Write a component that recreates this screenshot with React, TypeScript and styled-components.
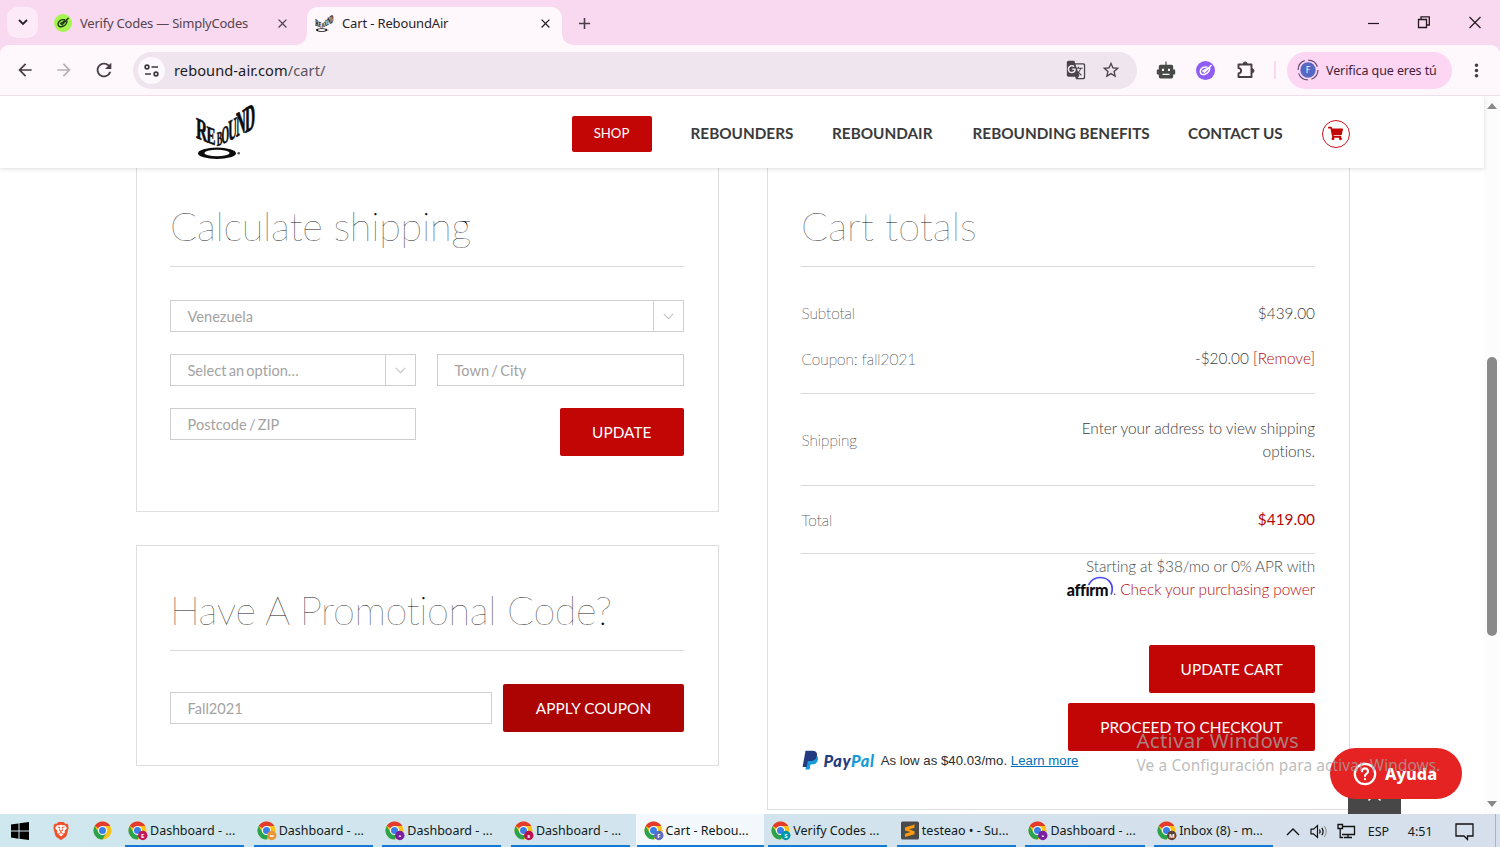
import React from "react";
import styled, { createGlobalStyle } from "styled-components";
import { MdArrowBack, MdArrowForward, MdRefresh, MdGTranslate, MdStarBorder, MdMoreVert, MdClose, MdAdd } from "react-icons/md";
import { FaShoppingCart } from "react-icons/fa";
import { SiBrave } from "react-icons/si";

const Global = createGlobalStyle`
  * { box-sizing: border-box; }
  html, body { margin: 0; padding: 0; overflow: hidden; background: #fff; }
  svg { display: block; flex: none; }
`;

const ui = `"Noto Sans", "Open Sans", sans-serif`;
const lato = `Lato, "Liberation Sans", sans-serif`;

const Screen = styled.div`
  position: relative;
  width: 1500px;
  height: 847px;
  display: flex;
  flex-direction: column;
  overflow: hidden;
  font-family: ${ui};
`;

/* ---------- browser chrome ---------- */
const TabStrip = styled.div`
  height: 45px;
  flex: none;
  display: flex;
  background: #f8d9ef;
`;
const TabSearch = styled.div`
  width: 31px;
  height: 31px;
  margin: 7px 0 0 7px;
  border-radius: 10px;
  background: #fdeaf8;
  display: flex;
  align-items: center;
  justify-content: center;
`;
const Tab = styled.div<{ $active?: boolean; $w: number; $ml: number }>`
  position: relative;
  width: ${(p) => p.$w}px;
  margin: 7px 0 0 ${(p) => p.$ml}px;
  height: 38px;
  padding: 0 9px 6px 8px;
  display: flex;
  align-items: center;
  border-radius: 11px 11px 0 0;
  color: ${(p) => (p.$active ? "#2b2329" : "#54454f")};
  background: ${(p) => (p.$active ? "#fef8fc" : "transparent")};
`;
const Flare = styled.span<{ $right?: boolean }>`
  position: absolute;
  bottom: 0;
  ${(p) => (p.$right ? "right: -11px;" : "left: -11px;")}
  width: 11px;
  height: 11px;
  background: radial-gradient(circle at ${(p) => (p.$right ? "100%" : "0")} 0, transparent 10.5px, #fef8fc 11px);
`;
const TabTitle = styled.span<{ $ls?: number }>`
  flex: 1;
  margin-left: 8px;
  font-size: 13px;
  line-height: 18px;
  white-space: nowrap;
  letter-spacing: ${(p) => p.$ls ?? 0}px;
`;
const NewTab = styled.div`
  margin: 14px 0 0 13px;
  color: #4a3c46;
`;
const WindowButtons = styled.div`
  margin-left: auto;
  display: flex;
  gap: 37px;
  padding: 15px 18px 0 0;
`;
const Toolbar = styled.div`
  height: 51px;
  flex: none;
  display: flex;
  align-items: center;
  background: #fef8fc;
  border-radius: 9px 9px 0 0;
  border-bottom: 1px solid #ecdfe8;
  color: #4a3c46;
`;
const ToolbarBack = styled.div`
  flex: none;
  background: #f8d9ef;
`;
const NavButtons = styled.div`
  display: flex;
  align-items: center;
  gap: 19px;
  width: 133px;
  padding-left: 15px;
`;
const Omnibox = styled.div`
  width: 1004px;
  height: 37px;
  border-radius: 19px;
  background: #eee5ee;
  display: flex;
  align-items: center;
  padding: 0 16px 0 5px;
  color: #4a444a;
`;
const SiteInfo = styled.div`
  width: 27px;
  height: 27px;
  border-radius: 50%;
  background: #fdf8fd;
  display: flex;
  align-items: center;
  justify-content: center;
`;
const Address = styled.span`
  flex: 1;
  margin: -1px 0 0 9px;
  font-size: 14.6px;
  letter-spacing: 0.08px;
  color: #221c22;
  i { font-style: normal; color: #5d535b; }
`;
const OmniIcons = styled.div`
  display: flex;
  gap: 15px;
  align-items: center;
`;
const Extensions = styled.div`
  display: flex;
  align-items: center;
  gap: 20px;
  margin-left: 19px;
`;
const Separator = styled.div`
  width: 2px;
  height: 18px;
  margin-left: 18px;
  background: #fcd9f1;
`;
const Profile = styled.div`
  width: 165px;
  height: 37px;
  margin: 0 14px 0 11px;
  border-radius: 19px;
  background: #fdd6f3;
  display: flex;
  align-items: center;
  padding-left: 10px;
  gap: 7px;
  font-size: 12.5px;
  letter-spacing: -0.1px;
  color: #421f3a;
  white-space: nowrap;
`;

/* ---------- web page ---------- */
const Viewport = styled.div`
  height: 718px;
  flex: none;
  display: flex;
  overflow: hidden;
  font-family: ${lato};
  font-variant-ligatures: none;
`;
const Page = styled.div`
  position: relative;
  width: 1484px;
`;
const Header = styled.header`
  position: relative;
  z-index: 1;
  height: 72px;
  padding: 0 134.500px 0 195px;
  background: #fff;
  box-shadow: 0 1px 4px rgba(0, 0, 0, 0.14);
  display: flex;
  align-items: center;
  justify-content: space-between;
`;
const Menu = styled.nav`
  display: flex;
  align-items: center;
  gap: 38.5px;
  padding-top: 3px;
`;
const ShopLink = styled.a`
  width: 80px;
  height: 36px;
  margin-right: 0.5px;
  background: #c20505;
  border-radius: 2px;
  color: #fff;
  font-size: 13.2px;
  line-height: 35px;
  text-align: center;
`;
const MenuLink = styled.a<{ $w: number }>`
  width: ${(p) => p.$w}px;
  margin-top: -1px;
  white-space: nowrap;
  color: #3b3b3b;
  font-size: 15.3px;
  font-weight: 700;
`;
const CartButton = styled.a`
  width: 28px;
  height: 28px;
  border: 1.5px solid #c4141c;
  border-radius: 50%;
  display: flex;
  align-items: center;
  justify-content: center;
  color: #c20505;
`;
const Columns = styled.main`
  display: flex;
  gap: 48.5px;
  padding-left: 136px;
  align-items: flex-start;
`;
const LeftColumn = styled.div`
  width: 582.5px;
  display: flex;
  flex-direction: column;
  gap: 33px;
`;
const Card = styled.section<{ $h: number; $open?: boolean; $pt: number }>`
  width: 582.5px;
  height: ${(p) => p.$h}px;
  padding: ${(p) => p.$pt}px 33.5px 0 33px;
  border: 1px solid #dedede;
  ${(p) => p.$open && "border-top: 0;"}
`;
const Title = styled.h2<{ $ls?: number }>`
  margin: 0;
  height: 67px;
  border-bottom: 1px solid #d9d9d9;
  font-size: 39.8px;
  line-height: 52px;
  font-weight: 100;
  color: #111;
  white-space: nowrap;
  letter-spacing: ${(p) => p.$ls ?? 0}px;
`;
const ShippingGrid = styled.div`
  margin-top: 33px;
  display: grid;
  grid-template-columns: 246px 247px;
  grid-template-rows: 32px 32px 48px;
  justify-content: space-between;
  row-gap: 22px;
`;
const Field = styled.div<{ $wide?: boolean; $w?: number }>`
  ${(p) => p.$wide && "grid-column: 1 / 3;"}
  ${(p) => p.$w && `width: ${p.$w}px;`}
  height: 32px;
  border: 1px solid #cfcfcf;
  padding-left: 16.5px;
  display: flex;
  justify-content: space-between;
  color: #a3a3a3;
  font-size: 14.6px;
  line-height: 31px;
  word-spacing: -1.5px;
`;
const Caret = styled.div`
  width: 30px;
  border-left: 1px solid #cfcfcf;
  display: flex;
  align-items: center;
  justify-content: center;
`;
const RedButton = styled.button<{ $w: number; $dark?: boolean }>`
  width: ${(p) => p.$w}px;
  height: 48px;
  padding: 0;
  border: 0;
  border-radius: 2px;
  justify-self: end;
  background: ${(p) => (p.$dark ? "#ac0303" : "#c20505")};
  color: #fff;
  font-family: ${lato};
  font-size: 15.4px;
  line-height: 46px;
  white-space: nowrap;
`;
const CouponRow = styled.div`
  margin-top: 33px;
  display: flex;
  align-items: center;
  justify-content: space-between;
`;
const Row = styled.div<{ $h: number; $line?: boolean; $pb?: number }>`
  height: ${(p) => p.$h}px;
  padding-bottom: ${(p) => p.$pb ?? 0}px;
  display: flex;
  align-items: center;
  justify-content: space-between;
  ${(p) => p.$line && "border-bottom: 1px solid #d9d9d9;"}
`;
const Label = styled.span<{ $ws?: number }>`
  font-size: 15.4px;
  font-weight: 100;
  color: #111;
  -webkit-text-stroke: 0.2px #555;
  padding-left: 0.5px;
`;
const Value = styled.span<{ $w?: number }>`
  font-size: 15.4px;
  line-height: 23px;
  font-weight: 300;
  color: #3c3c3c;
  text-align: right;
  ${(p) => p.$w && `width: ${p.$w}px; letter-spacing: -0.06px;`}
`;
const Red = styled.span<{ $strong?: boolean }>`
  color: #b50a0a;
  font-weight: ${(p) => (p.$strong ? 400 : 300)};
`;
const Totals = styled.div`
  padding-top: 24px;
`;
const Affirm = styled.div`
  margin-top: 1px;
  font-size: 15.4px;
  line-height: 23px;
  font-weight: 300;
  color: #4c4c4c;
`;
const AffirmLine = styled.div<{ $ls: number }>`
  display: flex;
  justify-content: flex-end;
  white-space: pre;
  letter-spacing: ${(p) => p.$ls}px;
`;
const AffirmLogo = styled.span`
  position: relative;
  width: 46px;
  color: #0b0b12;
  font-family: ${lato};
  font-weight: 900;
  font-size: 16px;
  letter-spacing: -0.3px;
  svg { position: absolute; left: 20px; top: -2px; }
`;
const Actions = styled.div`
  margin-top: 44px;
  display: flex;
  flex-direction: column;
  align-items: flex-end;
  gap: 10px;
`;
const PayPal = styled.div`
  display: flex;
  align-items: center;
  height: 20px;
  margin: -1px 0 0 0.5px;
  font-family: "Liberation Sans", Arial, sans-serif;
  font-size: 13.2px;
  letter-spacing: 0.02px;
  color: #2c2e2f;
  white-space: pre;
  a { color: #0070ba; text-decoration: underline; }
`;
const PayPalWord = styled.b`
  margin: 0 6px 0 5px;
  font-family: Lato, sans-serif;
  font-weight: 900;
  font-style: italic;
  font-size: 16.4px;
  letter-spacing: 0.6px;
  color: #253b80;
  span { color: #179bd7; }
`;
const ScrollBar = styled.div`
  width: 16px;
  background: #fcfcfc;
  display: flex;
  flex-direction: column;
  align-items: center;
  padding: 7px 0 7px;
`;
const Thumb = styled.div`
  width: 10px;
  height: 279px;
  margin: 248px 0 auto;
  border-radius: 5px;
  background: #8a8a8a;
`;
const BackToTop = styled.div`
  position: absolute;
  left: 1348px;
  bottom: 0;
  width: 53px;
  height: 53px;
  background: #474747;
  display: flex;
  justify-content: center;
  padding-top: 31px;
`;
const Help = styled.div`
  position: absolute;
  left: 1330px;
  top: 748px;
  width: 132px;
  height: 51px;
  border-radius: 26px;
  background: #e52323;
  display: flex;
  align-items: center;
  padding-left: 23px;
  gap: 8px;
  color: #fff;
  font-family: ${ui};
  font-size: 16.3px;
  font-weight: 800;
`;
const Watermark = styled.div`
  position: absolute;
  left: 1136.5px;
  top: 727px;
  color: rgba(165, 165, 165, 0.75);
  white-space: nowrap;
  pointer-events: none;
`;
const WatermarkTitle = styled.div`
  font-size: 20.4px;
  line-height: 27px;
  letter-spacing: 0.3px;
`;
const WatermarkText = styled.div`
  font-size: 15.4px;
  line-height: 23px;
  letter-spacing: 0.13px;
`;

/* ---------- taskbar ---------- */
const Taskbar = styled.div`
  height: 33px;
  flex: none;
  display: flex;
  background: linear-gradient(90deg, #cfe7ee, #d3e3ed 60%, #d7dfec);
  font-size: 12.5px;
  color: #121a20;
`;
const Pinned = styled.div`
  width: 121px;
  display: flex;
  align-items: center;
  gap: 23px;
  padding: 1px 0 0 11px;
`;
const Task = styled.div<{ $active?: boolean }>`
  width: 128.65px;
  flex: none;
  padding: 0 ${(p) => (p.$active ? 0 : 5.6)}px 0 ${(p) => (p.$active ? 1 : 4)}px;
  background: ${(p) => (p.$active ? "#f2f8fb" : "transparent")};
`;
const TaskInner = styled.div<{ $active?: boolean }>`
  height: 33px;
  display: flex;
  align-items: center;
  gap: 2px;
  padding: 2px 0 0 ${(p) => (p.$active ? 7 : 3)}px;
  border-bottom: 2px solid #1379d3;
  white-space: nowrap;
`;
const Tray = styled.div`
  flex: 1;
  display: flex;
  align-items: center;
  padding: 1px 0 0 7px;
`;
const TrayText = styled.span<{ $w: number; $ml: number }>`
  width: ${(p) => p.$w}px;
  margin-left: ${(p) => p.$ml}px;
`;
const TrayIcon = styled.span<{ $ml: number }>`
  margin-left: ${(p) => p.$ml}px;
`;
const ShowDesktop = styled.div`
  width: 1px;
  height: 33px;
  margin: -1px 4px 0 auto;
  background: #a9b4bf;
`;

const Leaf = ({ bg, fg, size }: { bg: string; fg: string; size: number }) => (
  <svg width={size} height={size} viewBox="0 0 18 18" fill="none" stroke={fg} strokeWidth="1.400" strokeLinecap="round" strokeLinejoin="round">
    <circle cx="9" cy="9" r="9" fill={bg} stroke="none" />
    <path d="M10.500 5.800C7 5 4.200 7.200 4 10c-.1 2.500 2.600 3.400 4.800 2.400 2-.9 4-2.600 4.200-5.200M6.500 9.500l1.600 1.200L14.200 4.300M6.500 9.500l4-2.300" />
  </svg>
);

const letters: [string, number, number, number, number, number][] = [
  ["R", 1, 33.5, 1.55, 0.65, 3],
  ["E", 11.5, 38, 1.35, 0.5, 2.4],
  ["B", 21.8, 42, 0.84, -0.25, 2],
  ["O", 26.6, 40.5, 0.98, -0.45, 2.45],
  ["U", 33.2, 37.5, 1.2, -0.65, 3],
  ["N", 41, 33, 1.35, -0.75, 3.5],
  ["D", 50, 29, 1.4, -0.75, 3.75],
];
const ReboundLogo = ({ w, h }: { w: number; h: number }) => (
  <svg width={w} height={h} viewBox="0 0 62 56" overflow="visible">
    {letters.map(([c, x, y, sx, k, sy]) => (
      <text key={c} transform={`matrix(${sx} ${k} 0 ${sy} ${x} ${y})`} fontFamily="Liberation Serif, serif" fontWeight="700" fontSize="10" fill="#0c0c0c" stroke="#0c0c0c" strokeWidth="0.250">{c}</text>
    ))}
    <path fillRule="evenodd" fill="#0c0c0c" d="M3 49.300a19 5.700 0 1 0 38 0a19 5.700 0 1 0 -38 0ZM9.500 49a12.500 3.200 0 1 0 25 0a12.500 3.200 0 1 0 -25 0Z" />
    <circle cx="43.700" cy="49.300" r="1.300" fill="#555" />
  </svg>
);

const ChromeIcon = ({ badge, mark }: { badge?: string; mark?: string }) => (
  <svg width="20" height="20" viewBox="0 0 20 20">
    <circle cx="9.500" cy="9.500" r="9" fill="#fbc116" />
    <path d="M9.500 9.500L1.700 5A9 9 0 0 1 17.300 5H9.500Z" fill="#e33b2e" />
    <path d="M1.700 5A9 9 0 0 0 9.500 18.500L13.400 11.800L9.500 9.500L5.600 11.800Z" fill="#2ba24c" />
    <circle cx="9.500" cy="9.500" r="4.500" fill="#fff" />
    <circle cx="9.500" cy="9.500" r="3.500" fill="#3a7fe8" />
    {badge && <circle cx="14.800" cy="14.500" r="4.700" fill={badge} />}
    {mark && <text x="14.800" y="16.700" fontSize="6" fontWeight="700" textAnchor="middle" fill="#fff">{mark}</text>}
  </svg>
);

const SublimeIcon = () => (
  <svg width="20" height="19" viewBox="0 0 20 19">
    <rect x="1" y="0.500" width="18" height="18" rx="1.500" fill="#4a4a4a" />
    <path d="M5 6.600L14.500 3.500v3.300L9 8.500 14.500 10.200v3L5 16v-3.300L10.700 11 5 9.400Z" fill="#ff9a0c" />
  </svg>
);

const RobotIcon = () => (
  <svg width="20" height="20" viewBox="0 0 20 20">
    <path fillRule="evenodd" fill="#484a48" d="M9.400 1.500h1.200v3.200H15.500a1.700 1.700 0 0 1 1.700 1.700V9.500h1.200a.8.800 0 0 1 .8.800v3.400a.8.800 0 0 1-.8.800h-1.200v2.300a1.700 1.700 0 0 1-1.700 1.700H4.500a1.700 1.700 0 0 1-1.700-1.700v-2.300H1.600a.8.800 0 0 1-.8-.8v-3.400a.8.800 0 0 1 .8-.8h1.200V6.400a1.700 1.700 0 0 1 1.700-1.700h4.900ZM6 8.800v2.200h2V8.800ZM12 8.800v2.200h2V8.800ZM6.500 13.800v1.200h7v-1.200Z" />
  </svg>
);

const PuzzleIcon = () => (
  <svg width="21" height="21" viewBox="0 0 21 21" fill="none" stroke="#4a3c46" strokeWidth="1.900" strokeLinejoin="round">
    <path d="M3.500 4.500h13v12.500h-13v-3.500c3.500-.6 3.500-4.900 0-5.500Z" />
    <path d="M8.200 4a2 2 0 0 1 4 0ZM17 8.800a2 2 0 0 1 0 4Z" fill="#4a3c46" strokeWidth="1" />
  </svg>
);

const SelectCaret = () => (
  <Caret>
    <svg width="11" height="7" viewBox="0 0 11 7" fill="none" stroke="#c4c4c4" strokeWidth="1.100"><path d="M0.800 0.800L5.500 5.600L10.200 0.800" /></svg>
  </Caret>
);

const tasks: { text: string; badge?: string; mark?: string; active?: boolean; sublime?: boolean }[] = [
  { text: "Dashboard - ...", badge: "#c2185b", mark: "E" },
  { text: "Dashboard - ...", badge: "#e8963c", mark: "∞" },
  { text: "Dashboard - ...", badge: "#7b1fa2", mark: "•" },
  { text: "Dashboard - ...", badge: "#b8104f", mark: "s" },
  { text: "Cart - Rebou...", badge: "#5c6bc0", mark: "F", active: true },
  { text: "Verify Codes ...", badge: "#0097a7", mark: "S" },
  { text: "testeao • - Su...", sublime: true },
  { text: "Dashboard - ...", badge: "#7b1fa2", mark: "•" },
  { text: "Inbox (8) - m...", badge: "#5d4037", mark: "M" },
];

export default function App() {
  return (
    <Screen>
      <Global />
      <TabStrip>
        <TabSearch>
          <svg width="10" height="7" viewBox="0 0 10 7" fill="none" stroke="#2b2329" strokeWidth="1.900"><path d="M1 1l4 4 4-4" /></svg>
        </TabSearch>
        <Tab $w={253} $ml={8}>
          <Leaf bg="#a6f54e" fg="#1c3a12" size={18} />
          <TabTitle $ls={-0.22}>Verify Codes — SimplyCodes</TabTitle>
          <MdClose size={15} />
        </Tab>
        <Tab $active $w={255} $ml={8}>
          <Flare />
          <ReboundLogo w={19} h={19} />
          <TabTitle $ls={-0.15}>Cart - ReboundAir</TabTitle>
          <MdClose size={15} />
          <Flare $right />
        </Tab>
        <NewTab><MdAdd size={19} /></NewTab>
        <WindowButtons>
          <svg width="13" height="14" viewBox="0 0 13 14"><path d="M1 8.500h11" stroke="#221a20" strokeWidth="1.200" /></svg>
          <svg width="14" height="14" viewBox="0 0 14 14" fill="none" stroke="#221a20" strokeWidth="1.300"><path d="M1.500 4.500h8v8h-8zM4 4V1.800h8.300V10H10" /></svg>
          <svg width="14" height="14" viewBox="0 0 14 14"><path d="M1.500 2l11 11M12.500 2l-11 11" stroke="#221a20" strokeWidth="1.200" /></svg>
        </WindowButtons>
      </TabStrip>
      <ToolbarBack>
        <Toolbar>
          <NavButtons>
            <MdArrowBack size={20} />
            <MdArrowForward size={20} color="#b9adb6" />
            <MdRefresh size={22} />
          </NavButtons>
          <Omnibox>
            <SiteInfo>
              <svg width="15" height="13" viewBox="0 0 15 13" fill="none" stroke="#3d373d" strokeWidth="1.600">
                <circle cx="3" cy="3" r="1.900" /><path d="M7.500 3h6.500M1 10h6" /><circle cx="12" cy="10" r="1.900" />
              </svg>
            </SiteInfo>
            <Address>rebound-air.com<i>/cart/</i></Address>
            <OmniIcons>
              <MdGTranslate size={20} />
              <MdStarBorder size={20} />
            </OmniIcons>
          </Omnibox>
          <Extensions>
            <RobotIcon />
            <Leaf bg="#8f5df5" fg="#fff" size={19} />
            <PuzzleIcon />
          </Extensions>
          <Separator />
          <Profile>
            <svg width="22" height="22" viewBox="0 0 22 22">
              <circle cx="11" cy="11" r="9.900" fill="none" stroke="#6b4c77" strokeWidth="1.200" strokeDasharray="12 3.500" />
              <circle cx="11" cy="11" r="7.700" fill="#5468c4" />
              <text x="11" y="14" fontSize="8.500" textAnchor="middle" fill="#fff">F</text>
            </svg>
            Verifica que eres tú
          </Profile>
          <MdMoreVert size={21} />
        </Toolbar>
      </ToolbarBack>

      <Viewport>
        <Page>
          <Header>
            <ReboundLogo w={62} h={56} />
            <Menu>
              <ShopLink>SHOP</ShopLink>
              <MenuLink $w={103}>REBOUNDERS</MenuLink>
              <MenuLink $w={102}>REBOUNDAIR</MenuLink>
              <MenuLink $w={177}>REBOUNDING BENEFITS</MenuLink>
              <MenuLink $w={95}>CONTACT US</MenuLink>
              <CartButton><FaShoppingCart size={15} /></CartButton>
            </Menu>
          </Header>
          <Columns>
            <LeftColumn>
              <Card $h={344} $pt={32} $open>
                <Title $ls={-0.28}>Calculate shipping</Title>
                <ShippingGrid>
                  <Field $wide>Venezuela<SelectCaret /></Field>
                  <Field>Select an option…<SelectCaret /></Field>
                  <Field>Town / City</Field>
                  <Field>Postcode / ZIP</Field>
                  <RedButton $w={124.5}>UPDATE</RedButton>
                </ShippingGrid>
              </Card>
              <Card $h={221} $pt={38}>
                <Title $ls={-0.42}>Have A Promotional Code?</Title>
                <CouponRow>
                  <Field $w={322}>Fall2021</Field>
                  <RedButton $w={181} $dark>APPLY COUPON</RedButton>
                </CouponRow>
              </Card>
            </LeftColumn>
            <Card $h={642} $pt={32} $open>
              <Title>Cart totals</Title>
              <Totals>
                <Row $h={44}><Label>Subtotal</Label><Value>$439.00</Value></Row>
                <Row $h={59} $pb={11} $line><Label>Coupon: fall2021</Label><Value>-$20.00 <Red>[Remove]</Red></Value></Row>
                <Row $h={92} $line><Label>Shipping</Label><Value $w={250}>Enter your address to view shipping options.</Value></Row>
                <Row $h={68} $line><Label>Total</Label><Value><Red $strong>$419.00</Red></Value></Row>
              </Totals>
              <Affirm>
                <AffirmLine $ls={-0.15}>Starting at $38/mo or 0% APR with</AffirmLine>
                <AffirmLine $ls={-0.08}>
                  <AffirmLogo>
                    affırm
                    <svg width="27" height="22" viewBox="0 0 27 22" fill="none" stroke="#4a4af4" strokeWidth="1.700"><path d="M1.500 9C4 4 8 1.500 13 1.500C21 1.500 25.500 7 25.200 13.500C25.200 15.500 24.800 17 24 18.500" /></svg>
                  </AffirmLogo>
                  . <Red>Check your purchasing power</Red>
                </AffirmLine>
              </Affirm>
              <Actions>
                <RedButton $w={166.5}>UPDATE CART</RedButton>
                <RedButton $w={247}>PROCEED TO CHECKOUT</RedButton>
              </Actions>
              <PayPal>
                <svg width="17" height="20" viewBox="0 0 17 20">
                  <path d="M6 5h6.500c3 .5 4 2.500 3.300 5.300-.8 3-3 4.200-6 4.200H8.500L7.600 19.500H3.500Z" fill="#179bd7" />
                  <path d="M3.500 .8h6.800c3.700 0 5.300 2 4.600 5.200-.8 3.600-3.200 5-6.600 5H5.800L4.700 17H.6Z" fill="#253b80" />
                </svg>
                <PayPalWord>Pay<span>Pal</span></PayPalWord>
                <PayPalOffer />
              </PayPal>
            </Card>
          </Columns>
          <BackToTop>
            <svg width="15" height="10" viewBox="0 0 15 10" fill="none" stroke="#fff" strokeWidth="1.500"><path d="M1.500 8.500l6-6 6 6" /></svg>
          </BackToTop>
        </Page>
        <ScrollBar>
          <svg width="10" height="6" viewBox="0 0 10 6"><path d="M5 0l5 6H0z" fill="#8a8a8a" /></svg>
          <Thumb />
          <svg width="10" height="6" viewBox="0 0 10 6"><path d="M5 6l5-6H0z" fill="#8a8a8a" /></svg>
        </ScrollBar>
      </Viewport>

      <Taskbar>
        <Pinned>
          <svg width="18" height="18" viewBox="0 0 18 18" fill="#000"><path d="M0 2.500l7.500-1.100v7.200H0zM8.500 1.200L18 0v8.600H8.500zM0 9.500h7.500v7.200L0 15.600zM8.500 9.500H18V18l-9.500-1.300z" /></svg>
          <BraveShield><SiBrave size={18} color="#f2502a" /></BraveShield>
          <ChromeIcon />
        </Pinned>
        {tasks.map((t, i) => (
          <Task key={i} $active={t.active}>
            <TaskInner $active={t.active}>
              {t.sublime ? <SublimeIcon /> : <ChromeIcon badge={t.badge} mark={t.mark} />}
              <span>{t.text}</span>
            </TaskInner>
          </Task>
        ))}
        <Tray>
          <svg width="14" height="9" viewBox="0 0 14 9" fill="none" stroke="#111" strokeWidth="1.400"><path d="M1 8l6-6 6 6" /></svg>
          <TrayIcon $ml={10}>
            <svg width="18" height="15" viewBox="0 0 18 15" fill="none" stroke="#111" strokeWidth="1.200"><path d="M1 5.200h2.500L7.500 1.500v12L3.500 9.800H1zM9.500 5.500q1.300 2 0 4M11.800 3.800q2.500 3.700 0 7.400" /><path d="M14.300 2q3.800 5.500 0 11" stroke="#999" /></svg>
          </TrayIcon>
          <TrayIcon $ml={9}>
            <svg width="19" height="16" viewBox="0 0 19 16" fill="none" stroke="#111" strokeWidth="1.300"><path d="M6 3.500h11.500v8H5M11 11.500v3M7 14.500h8M1 1.500h4.500v4H1zM3.200 5.500v9h3" /></svg>
          </TrayIcon>
          <TrayText $ml={12} $w={40}>ESP</TrayText>
          <TrayText $ml={0} $w={47}>4:51</TrayText>
          <svg width="19" height="19" viewBox="0 0 19 19" fill="none" stroke="#111" strokeWidth="1.300"><path d="M1 2h17v12h-5.500v3.500L9 14H1z" /></svg>
          <ShowDesktop />
        </Tray>
      </Taskbar>

      <Help>
        <svg width="24" height="24" viewBox="0 0 24 24" fill="none" stroke="#fff" strokeWidth="2.200" strokeLinecap="round">
          <circle cx="12" cy="12" r="10.200" /><path d="M9 9.300a3 3 0 1 1 4.500 2.600c-1 .6-1.500 1-1.500 2M12 17v.2" />
        </svg>
        Ayuda
      </Help>
      <Watermark>
        <WatermarkTitle>Activar Windows</WatermarkTitle>
        <WatermarkText>Ve a Configuración para activar Windows.</WatermarkText>
      </Watermark>
    </Screen>
  );
}

const BraveShield = styled.span`
  background: radial-gradient(circle, #fff 0 6px, transparent 6.5px);
`;

function PayPalOffer() {
  return (
    <span>
      As low as $40.03/mo. <a>Learn more</a>
    </span>
  );
}
